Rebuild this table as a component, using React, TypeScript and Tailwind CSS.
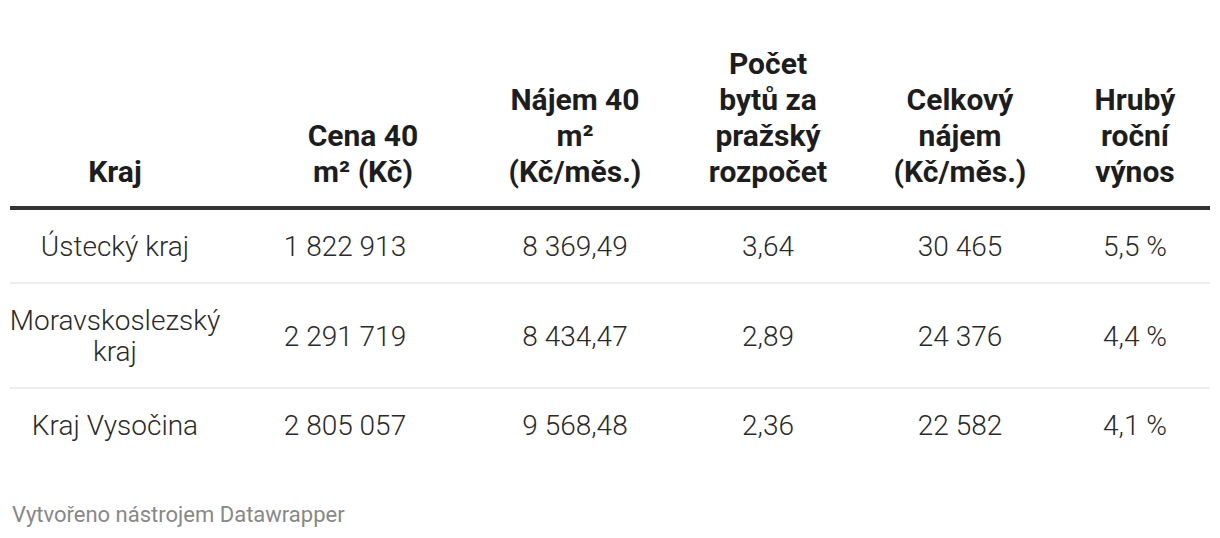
const cols = 'grid grid-cols-[210px_286px_138px_248px_136px_182px]'

const rows = [
  { kraj: ['Ústecký kraj'], cena: '1 822 913', najem: '8 369,49', pocet: '3,64', celkem: '30 465', vynos: '5,5 %' },
  { kraj: ['Moravskoslezský', 'kraj'], cena: '2 291 719', najem: '8 434,47', pocet: '2,89', celkem: '24 376', vynos: '4,4 %' },
  { kraj: ['Kraj Vysočina'], cena: '2 805 057', najem: '9 568,48', pocet: '2,36', celkem: '22 582', vynos: '4,1 %' },
]

function Head({ lines, last }: { lines: string[]; last?: boolean }) {
  return (
    <div className={`flex flex-col items-center justify-end whitespace-nowrap ${last ? 'pl-[32px]' : ''}`}>
      {lines.map((l) => (
        <span key={l}>{l}</span>
      ))}
    </div>
  )
}

function Cell({ children, className = '' }: { children: React.ReactNode; className?: string }) {
  return (
    <div className={`flex flex-col items-center justify-center whitespace-nowrap ${className}`}>
      {children}
    </div>
  )
}

export default function App() {
  return (
    <div className="w-[1220px] h-[538px] bg-white px-[10px] pt-[46px] font-['Roboto',sans-serif]">
      <div className={`${cols} border-b-4 border-[#333333] pb-[16px] text-[30px] font-bold leading-[36px] text-[#1d1d1d]`}>
        <Head lines={['Kraj']} />
        <Head lines={['Cena 40', 'm² (Kč)']} />
        <Head lines={['Nájem 40', 'm²', '(Kč/měs.)']} />
        <Head lines={['Počet', 'bytů za', 'pražský', 'rozpočet']} />
        <Head lines={['Celkový', 'nájem', '(Kč/měs.)']} />
        <Head lines={['Hrubý', 'roční', 'výnos']} last />
      </div>
      {rows.map((r, i) => (
        <div
          key={r.cena}
          className={`${cols} pt-[21px] pb-[20px] text-[28px] font-light leading-[31px] text-[#2a2a2a] ${i < rows.length - 1 ? 'border-b-2 border-[#eeeeee]' : ''}`}
        >
          <Cell>
            {r.kraj.map((k) => (
              <span key={k}>{k}</span>
            ))}
          </Cell>
          <Cell className="pr-[36px]">{r.cena}</Cell>
          <Cell>{r.najem}</Cell>
          <Cell>{r.pocet}</Cell>
          <Cell>{r.celkem}</Cell>
          <Cell className="pl-[32px]">{r.vynos}</Cell>
        </div>
      ))}
      <div className="mt-[42px] pl-[2px] text-[22px] leading-[24px] text-[#888888]">Vytvořeno nástrojem Datawrapper</div>
    </div>
  )
}
